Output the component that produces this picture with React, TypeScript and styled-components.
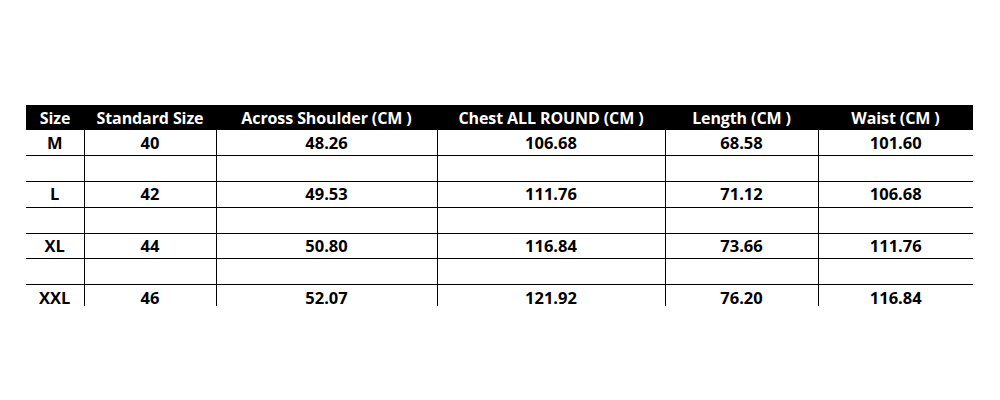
import styled, { createGlobalStyle } from 'styled-components';

const GlobalStyle = createGlobalStyle`
  body {
    margin: 0;
    background: #fff;
    font-family: "Open Sans", "Liberation Sans", sans-serif;
  }
`;

const Page = styled.div`
  width: 1000px;
  height: 400px;
  padding: 105px 0 0 26px;
  box-sizing: border-box;
`;

const Clip = styled.div`
  width: 947px;
  height: 201px;
  overflow: hidden;
`;

const Table = styled.table`
  border-collapse: collapse;
  table-layout: fixed;
  width: 947px;
`;

const HeadRow = styled.tr`
  height: 25px;
  background: #000;
`;

const HeadCell = styled.th`
  color: #fff;
  font-size: 16px;
  font-weight: 700;
  line-height: 20px;
  padding: 0;
  text-align: center;
  white-space: nowrap;
  letter-spacing: -0.1px;
`;

const Row = styled.tr`
  height: 25.8px;
`;

const Cell = styled.td<{ $first?: boolean; $top?: boolean }>`
  padding: 0;
  text-align: center;
  font-size: 16.5px;
  font-weight: 700;
  line-height: 20px;
  color: #000;
  border-left: ${(p) => (p.$first ? 'none' : '1px solid #000')};
  border-top: ${(p) => (p.$top ? '1px solid #000' : 'none')};
`;

const widths = [58, 132, 221, 228, 153, 155];
const headers = [
  'Size',
  'Standard Size',
  'Across Shoulder (CM )',
  'Chest ALL ROUND (CM )',
  'Length (CM )',
  'Waist (CM )',
];

const sizes = [
  ['M', '40', '48.26', '106.68', '68.58', '101.60'],
  ['L', '42', '49.53', '111.76', '71.12', '106.68'],
  ['XL', '44', '50.80', '116.84', '73.66', '111.76'],
  ['XXL', '46', '52.07', '121.92', '76.20', '116.84'],
];

const rows: string[][] = [];
sizes.forEach((s, i) => {
  rows.push(s);
  if (i < sizes.length - 1) rows.push(['', '', '', '', '', '']);
});

const App = () => {
  return (
    <Page>
      <GlobalStyle />
      <Clip>
        <Table>
          <colgroup>
            {widths.map((w, i) => (
              <col key={i} style={{ width: w }} />
            ))}
          </colgroup>
          <thead>
            <HeadRow>
              {headers.map((h) => (
                <HeadCell key={h}>{h}</HeadCell>
              ))}
            </HeadRow>
          </thead>
          <tbody>
            {rows.map((r, ri) => (
              <Row key={ri}>
                {r.map((c, ci) => (
                  <Cell key={ci} $first={ci === 0} $top={ri > 0}>
                    {c}
                  </Cell>
                ))}
              </Row>
            ))}
          </tbody>
        </Table>
      </Clip>
    </Page>
  );
};

export default App;
